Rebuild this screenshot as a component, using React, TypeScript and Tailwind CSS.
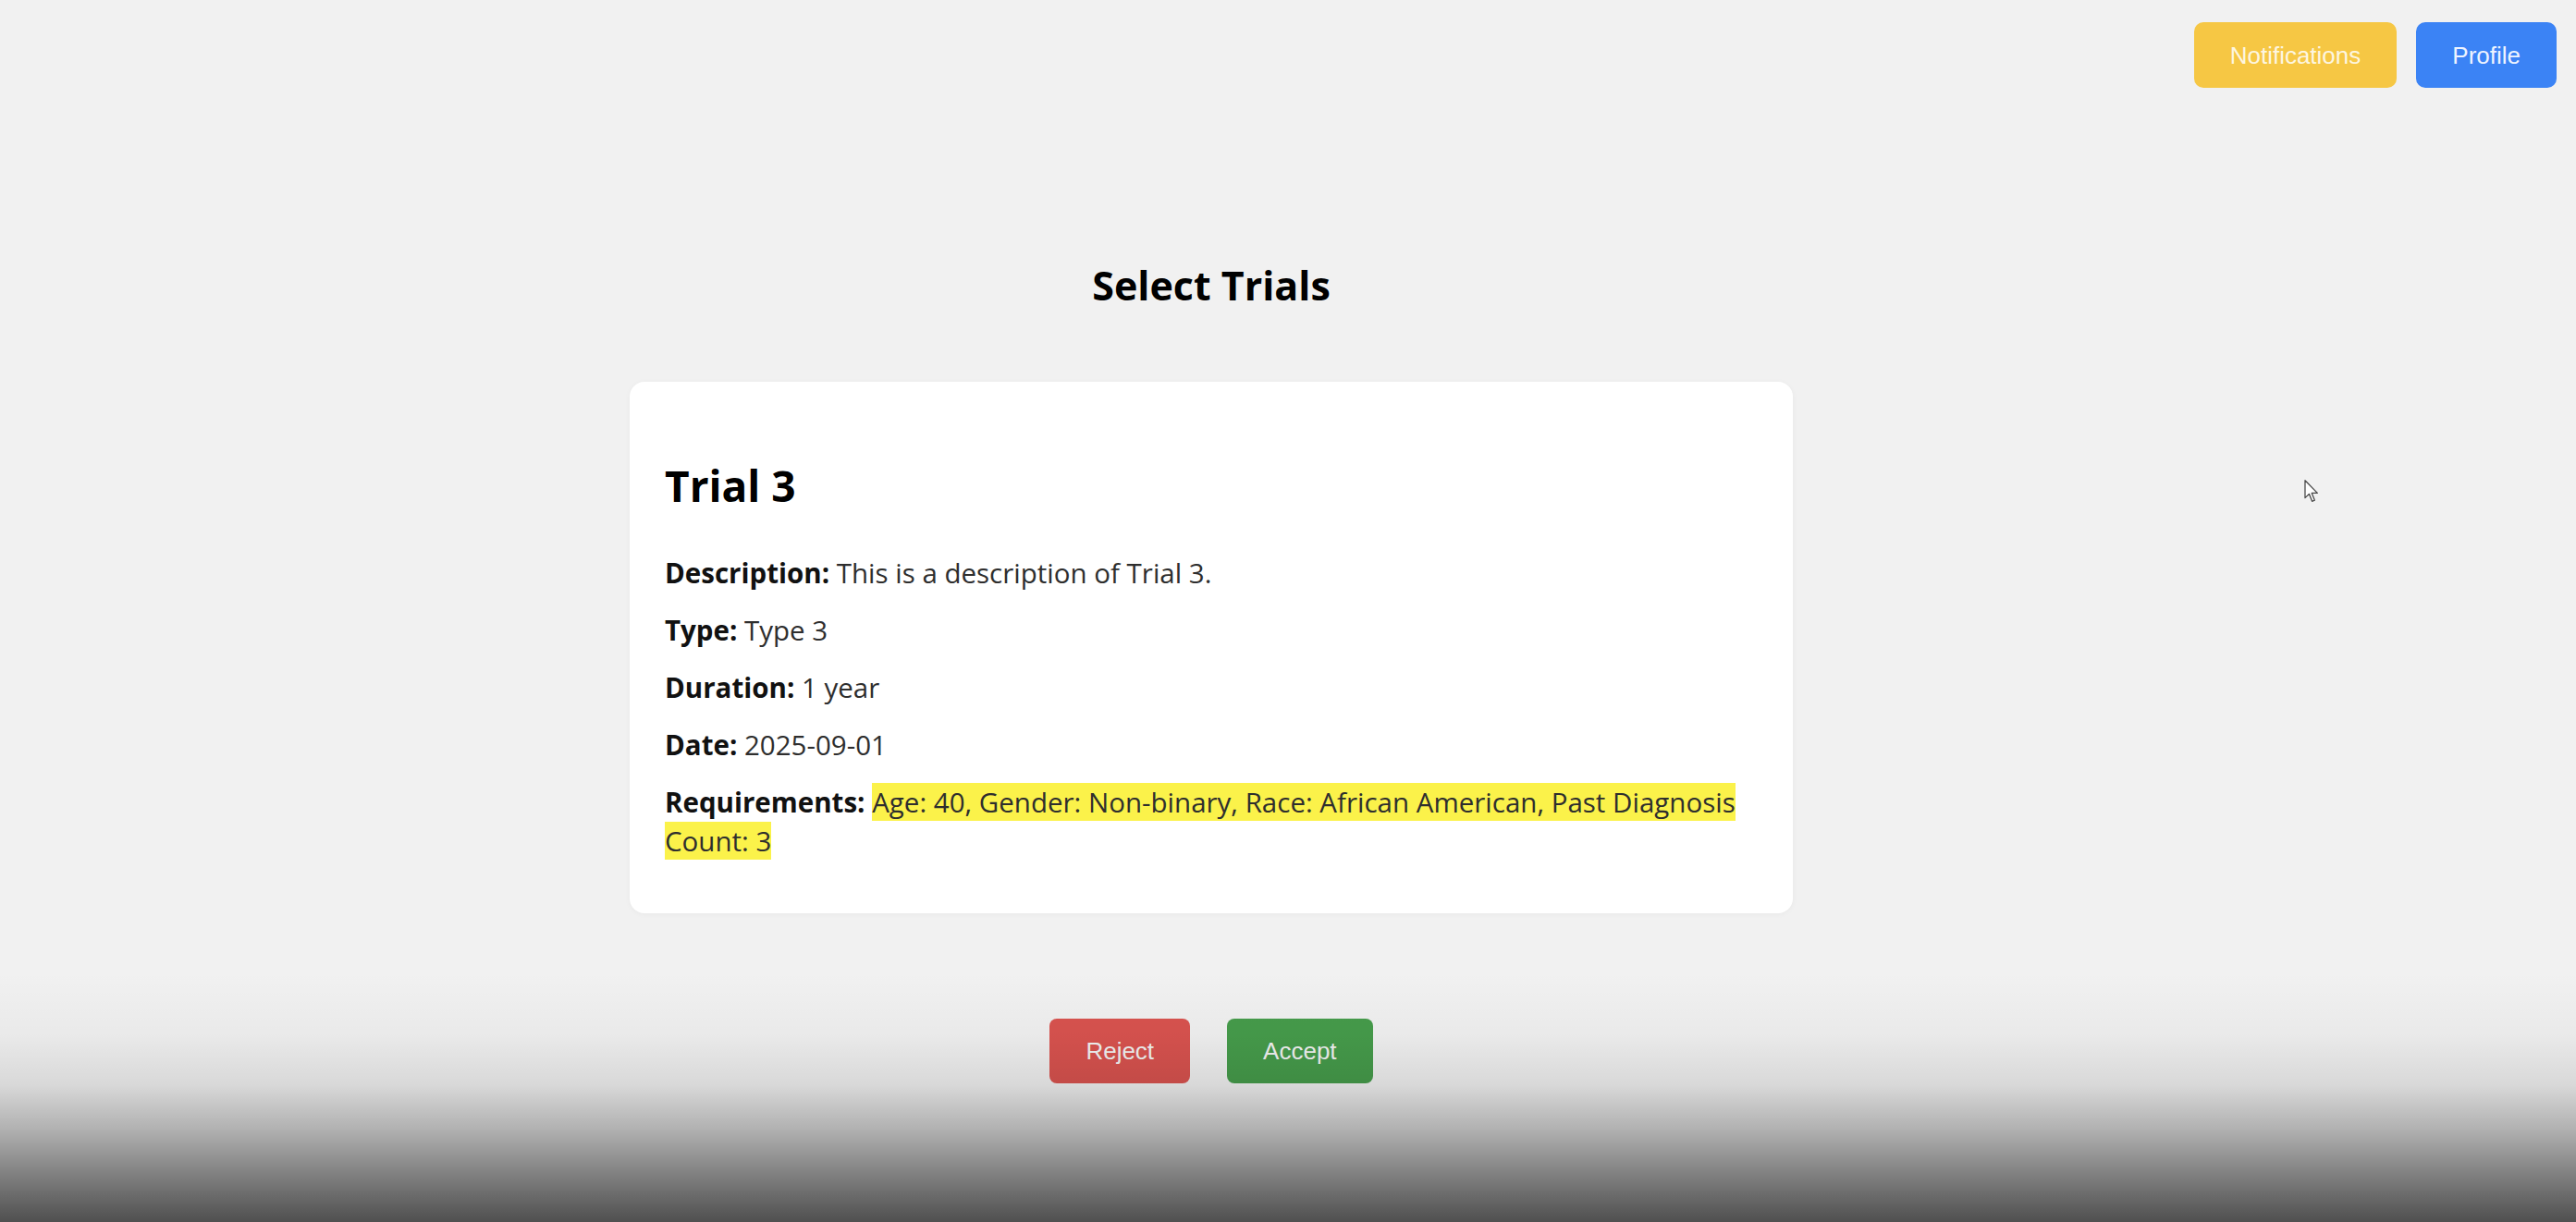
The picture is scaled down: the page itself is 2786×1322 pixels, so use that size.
import React from "react";

function Cursor() {
  return (
    <svg width="16" height="25" viewBox="0 0 13 21" className="absolute left-[2492px] top-[519px]">
      <path
        d="M0.6 0.6 L0.6 16.5 L4.3 12.9 L7 19.6 L9.3 18.6 L6.7 12.1 L11.8 12.1 Z"
        fill="#ffffff"
        stroke="#4a4a4a"
        strokeWidth="1.1"
        strokeLinejoin="round"
      />
    </svg>
  );
}

function Row({ label, children }: { label: string; children: React.ReactNode }) {
  return (
    <p>
      <strong className="font-bold text-[#111]">{label}</strong> {children}
    </p>
  );
}

export default function App() {
  return (
    <div className="relative h-screen w-full overflow-hidden bg-[#f1f1f1] font-['Open_Sans',sans-serif]">
      <header className="flex justify-end gap-[21px] pt-[24px] pr-[21px]">
        <button className="flex h-[71px] items-center rounded-[10px] bg-[#f6c744] px-[39px] font-['Liberation_Sans',Arial,sans-serif] text-[26px] leading-[30px] text-[#fdf6e0]">
          Notifications
        </button>
        <button className="flex h-[71px] items-center rounded-[10px] bg-[#3b83f5] px-[39px] font-['Liberation_Sans',Arial,sans-serif] text-[26px] leading-[30px] text-[#eef4ff]">
          Profile
        </button>
      </header>

      <main className="flex flex-col items-center pr-[166px]">
        <h1 className="mt-[188px] text-[43px] leading-[52px] font-bold text-black">Select Trials</h1>

        <section className="mt-[78px] w-[1258px] rounded-[16px] bg-white px-[38px] pt-[85px] pb-[57px] shadow-[0_1px_6px_rgba(0,0,0,0.04)]">
          <h2 className="text-[46px] leading-[55px] font-bold text-black">Trial 3</h2>
          <div className="mt-[46px] flex flex-col gap-[20px] text-[29.5px] leading-[42px] text-[#2e2e2e]">
            <Row label="Description:">This is a description of Trial 3.</Row>
            <Row label="Type:">Type 3</Row>
            <Row label="Duration:">1 year</Row>
            <Row label="Date:">2025-09-01</Row>
            <Row label="Requirements:">
              <span className="bg-[#fbf24a]">
                Age: 40, Gender: Non-binary, Race: African American, Past Diagnosis Count: 3
              </span>
            </Row>
          </div>
        </section>

        <div className="mt-[114px] flex gap-[40px]">
          <button className="flex h-[70px] items-center rounded-[8px] bg-[#d9534f] px-[39px] font-['Liberation_Sans',Arial,sans-serif] text-[26px] leading-[30px] text-[#f3f3f3]">
            Reject
          </button>
          <button className="flex h-[70px] items-center rounded-[8px] bg-[#469c4b] px-[39px] font-['Liberation_Sans',Arial,sans-serif] text-[26px] leading-[30px] text-[#f3f3f3]">
            Accept
          </button>
        </div>
      </main>

      <div className="pointer-events-none absolute bottom-0 left-0 right-0 h-[270px] bg-[linear-gradient(to_bottom,rgba(0,0,0,0)_0%,rgba(0,0,0,0.03)_25%,rgba(0,0,0,0.1)_45%,rgba(0,0,0,0.26)_62%,rgba(0,0,0,0.46)_80%,rgba(0,0,0,0.67)_100%)]" />

      <Cursor />
    </div>
  );
}
